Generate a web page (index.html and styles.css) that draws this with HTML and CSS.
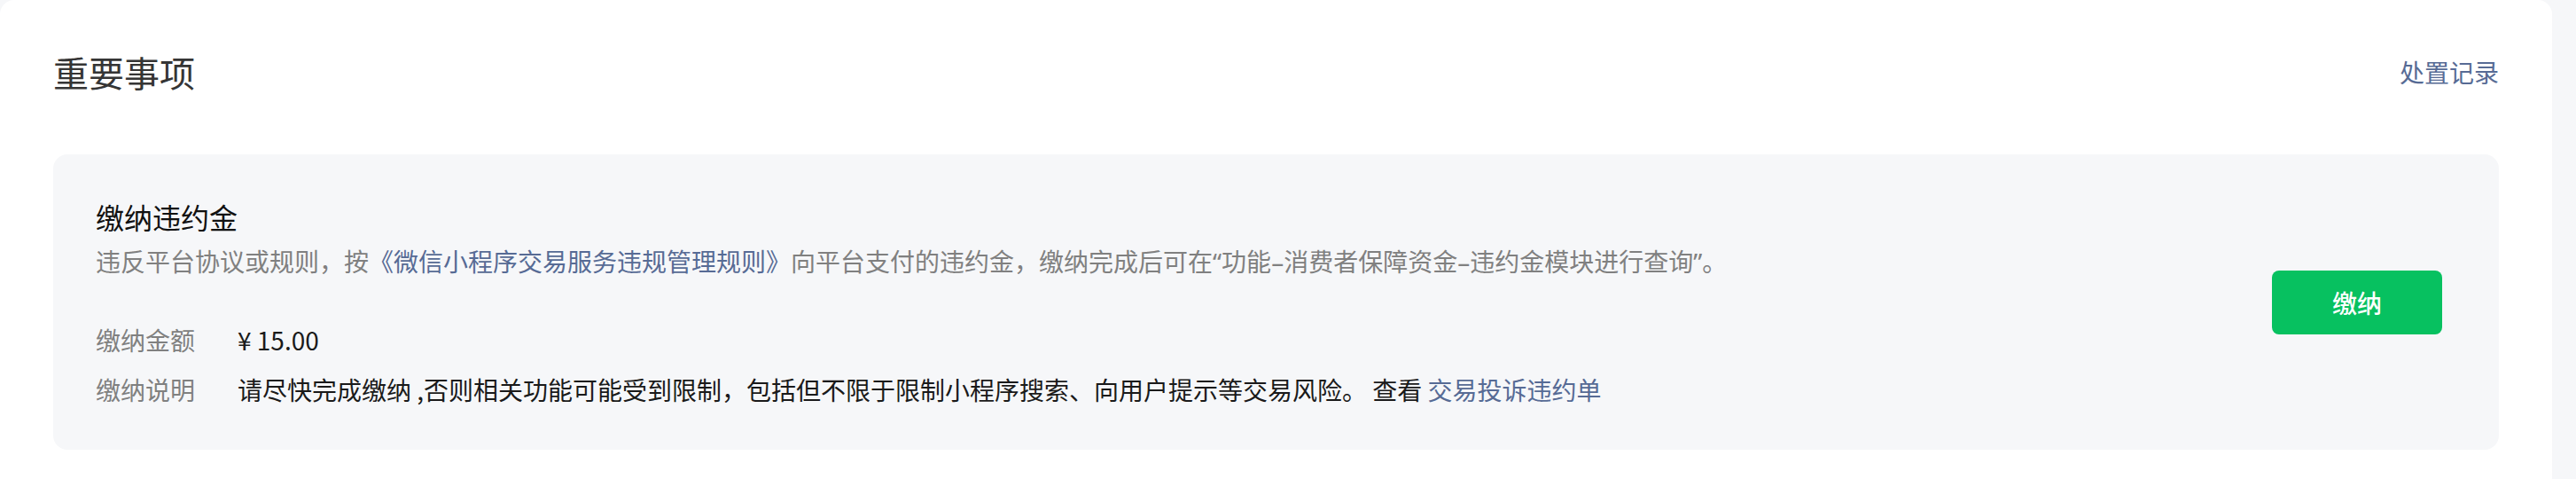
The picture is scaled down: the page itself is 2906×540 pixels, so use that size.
FILE: index.html
```html
<!DOCTYPE html>
<html lang="zh-CN">
<head>
<meta charset="utf-8">
<title>重要事项</title>
<link rel="stylesheet" href="styles.css">
</head>
<body>
  <div class="card">
    <div class="card-head">
      <h2 class="card-title">重要事项</h2>
      <a class="link head-link" href="#">处置记录</a>
    </div>
    <div class="notice">
      <div class="notice-main">
        <div class="notice-title">缴纳违约金</div>
        <div class="notice-desc">违反平台协议或规则，按<a class="link" href="#">《微信小程序交易服务违规管理规则》</a>向平台支付的违约金，缴纳完成后可在<span class="latin">“</span>功能<span class="latin">–</span>消费者保障资金<span class="latin">–</span>违约金模块进行查询<span class="latin">”</span>。</div>
        <div class="info">
          <div class="info-row">
            <span class="info-label">缴纳金额</span>
            <span class="info-value">¥ 15.00</span>
          </div>
          <div class="info-row">
            <span class="info-label">缴纳说明</span>
            <span class="info-value">请尽快完成缴纳 ,否则相关功能可能受到限制，包括但不限于限制小程序搜索、向用户提示等交易风险。 查看 <a class="link" href="#">交易投诉违约单</a></span>
          </div>
        </div>
      </div>
      <button class="btn-primary" type="button">缴纳</button>
    </div>
  </div>
</body>
</html>
```

FILE: styles.css
```css
html, body {
  margin: 0;
  padding: 0;
}

body {
  background: #f6f7f9;
  font-family: "Noto Sans CJK SC", "Noto Sans", sans-serif;
  color: #1a1a1a;
  overflow: hidden;
}

.card {
  width: 2879px;
  box-sizing: border-box;
  min-height: 600px;
  background: #ffffff;
  border-radius: 16px 16px 0 0;
  padding: 56px 60px 60px 60px;
}

.card-head {
  display: flex;
  align-items: center;
  justify-content: space-between;
  height: 50px;
}

.card-title {
  margin: 0;
  font-size: 40px;
  line-height: 50px;
  font-weight: 400;
  color: #353535;
}

.link {
  color: #576b95;
  text-decoration: none;
}

.head-link {
  font-size: 28px;
  line-height: 40px;
}

.latin {
  font-family: "Noto Sans", "Liberation Sans", sans-serif;
}

.notice {
  margin-top: 68px;
  background: #f6f7f9;
  border-radius: 16px;
  padding: 48px 64px 48px 48px;
  display: flex;
  align-items: center;
  justify-content: space-between;
}

.notice-title {
  font-size: 32px;
  line-height: 44px;
  font-weight: 400;
  color: #111111;
}

.notice-desc {
  margin-top: 8px;
  font-size: 28px;
  line-height: 40px;
  color: #808080;
}

.info {
  margin-top: 48px;
  display: flex;
  flex-direction: column;
  gap: 16px;
}

.info-row {
  display: flex;
  font-size: 28px;
  line-height: 40px;
}

.info-label {
  width: 160px;
  flex-shrink: 0;
  color: #808080;
}

.info-value {
  color: #1a1a1a;
}

.btn-primary {
  width: 192px;
  height: 72px;
  border: none;
  border-radius: 8px;
  background: #07c160;
  color: #ffffff;
  font-family: "Noto Sans CJK SC", "Noto Sans", sans-serif;
  font-size: 28px;
  font-weight: 500;
  flex-shrink: 0;
  cursor: pointer;
}
```
